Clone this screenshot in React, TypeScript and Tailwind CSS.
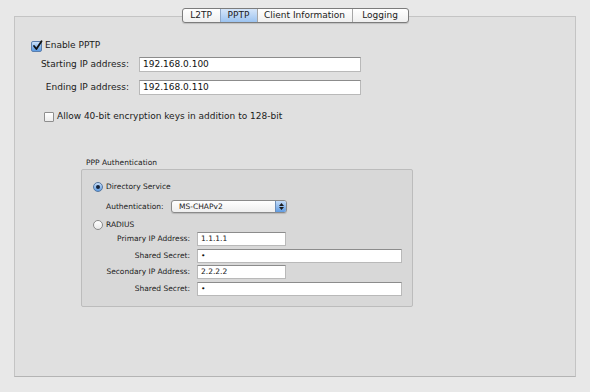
import React from "react";

const font = { fontFamily: '"DejaVu Sans", "Liberation Sans", sans-serif' };

function Check({ checked, size }: { checked: boolean; size: number }) {
  if (checked) {
    return (
      <div
        className="relative shrink-0 rounded-[2px] border border-[#5b7fae] bg-linear-to-b from-[#cfe3f9] via-[#8dbbee] to-[#5c9be2]"
        style={{ width: size, height: size }}
      >
        <svg className="absolute left-[0px] top-[-2px]" width={size} height={size} viewBox="0 0 12 12">
          <path d="M2.2 6.5 L4.8 9.8 L10.4 1.4" fill="none" stroke="#111" strokeWidth="2" strokeLinecap="round" strokeLinejoin="round" />
        </svg>
      </div>
    );
  }
  return (
    <div
      className="shrink-0 rounded-[1px] border border-[#8e8e8e] bg-linear-to-b from-[#ffffff] to-[#ececec]"
      style={{ width: size, height: size }}
    />
  );
}

function Radio({ on }: { on: boolean }) {
  if (on) {
    return (
      <div className="flex h-[10px] w-[10px] shrink-0 items-center justify-center rounded-full border border-[#56779f] bg-linear-to-b from-[#c8def8] to-[#5f9ce2]">
        <div className="h-[4px] w-[4px] rounded-full bg-[#14233a]" />
      </div>
    );
  }
  return <div className="h-[10px] w-[10px] shrink-0 rounded-full border border-[#8a8a8a] bg-linear-to-b from-[#ffffff] to-[#e9e9e9]" />;
}

function Field({ w, h, value, small }: { w: number; h: number; value: string; small?: boolean }) {
  return (
    <div
      className={
        "flex shrink-0 items-center border border-[#b9b9b9] border-t-[#8c8c8c] bg-white pl-[3px] text-[#111] " +
        (small ? "text-[7.5px]" : "text-[9px]")
      }
      style={{ width: w, height: h }}
    >
      {value}
    </div>
  );
}

export default function App() {
  return (
    <div className="h-[392px] w-[590px] overflow-hidden bg-[#e8e8e8] pt-[8px] text-[#1b1b1b]" style={font}>
      {/* tabs */}
      <div className="relative z-10 flex justify-center">
        <div className="flex h-[15px] overflow-hidden rounded-[3px] border border-[#7c7c7c] bg-linear-to-b from-[#ffffff] to-[#efefef] text-[9px] shadow-[0_1px_1px_rgba(0,0,0,0.15)]">
          <div className="flex w-[37px] items-center justify-center">L2TP</div>
          <div className="flex w-[37px] items-center justify-center border-l border-[#8fa9c9] bg-linear-to-b from-[#d6e6f9] to-[#9cc3f0]">PPTP</div>
          <div className="flex w-[95px] items-center justify-center border-l border-[#a6a6a6]">Client Information</div>
          <div className="flex w-[56px] items-center justify-center border-l border-[#a6a6a6]">Logging</div>
        </div>
      </div>

      {/* panel */}
      <div className="mx-[14px] mt-[-7px] flex h-[361px] flex-col border border-[#c4c4c4] border-b-[#b4b4b4] bg-[#e0e0e0] text-[9px]">
        <div className="ml-[16px] mt-[23px] flex h-[12px] items-center gap-[3px]">
          <Check checked size={11} />
          <span>Enable PPTP</span>
        </div>

        <div className="mt-[5px] flex items-center">
          <div className="w-[114px] text-right">Starting IP address:</div>
          <div className="ml-[10px]">
            <Field w={222} h={15} value="192.168.0.100" />
          </div>
        </div>
        <div className="mt-[8px] flex items-center">
          <div className="w-[114px] text-right">Ending IP address:</div>
          <div className="ml-[10px]">
            <Field w={222} h={15} value="192.168.0.110" />
          </div>
        </div>

        <div className="ml-[29px] mt-[16px] flex h-[11px] items-center gap-[3px]">
          <Check checked={false} size={10} />
          <span>Allow 40-bit encryption keys in addition to 128-bit</span>
        </div>

        {/* group */}
        <div className="ml-[71px] mt-[36px] h-[10px] text-[7.5px] leading-[10px]">PPP Authentication</div>
        <div className="ml-[66px] mt-[1px] flex h-[138px] w-[332px] flex-col rounded-[2px] border border-[#bcbcbc] bg-[#d8d8d8] text-[7.5px]">
          <div className="ml-[11px] mt-[12px] flex h-[10px] items-center gap-[3px]">
            <Radio on />
            <span>Directory Service</span>
          </div>
          <div className="ml-[24px] mt-[8px] flex h-[13px] items-center">
            <span className="w-[57px]">Authentication:</span>
            <div className="ml-[8px] flex h-[13px] w-[116px] overflow-hidden rounded-[3px] border border-[#8a8a8a] bg-linear-to-b from-[#ffffff] to-[#eeeeee] shadow-[0_1px_1px_rgba(0,0,0,0.15)]">
              <div className="flex flex-1 items-center pl-[7px]">MS-CHAPv2</div>
              <div className="flex w-[11px] flex-col items-center justify-center gap-[1px] border-l border-[#6d8fba] bg-linear-to-b from-[#c4dcf8] to-[#5f9be1]">
                <svg width="5" height="3" viewBox="0 0 5 3">
                  <path d="M0 3 L2.5 0 L5 3 Z" fill="#1a1a1a" />
                </svg>
                <svg width="5" height="3" viewBox="0 0 5 3">
                  <path d="M0 0 L2.5 3 L5 0 Z" fill="#1a1a1a" />
                </svg>
              </div>
            </div>
          </div>
          <div className="ml-[11px] mt-[7px] flex h-[10px] items-center gap-[3px]">
            <Radio on={false} />
            <span>RADIUS</span>
          </div>

          <div className="mt-[2px] flex items-center">
            <div className="w-[108px] text-right">Primary IP Address:</div>
            <div className="ml-[7px]">
              <Field w={89} h={14} value="1.1.1.1" small />
            </div>
          </div>
          <div className="mt-[3px] flex items-center">
            <div className="w-[108px] text-right">Shared Secret:</div>
            <div className="ml-[7px]">
              <Field w={205} h={14} value="•" small />
            </div>
          </div>
          <div className="mt-[2px] flex items-center">
            <div className="w-[108px] text-right">Secondary IP Address:</div>
            <div className="ml-[7px]">
              <Field w={89} h={14} value="2.2.2.2" small />
            </div>
          </div>
          <div className="mt-[3px] flex items-center">
            <div className="w-[108px] text-right">Shared Secret:</div>
            <div className="ml-[7px]">
              <Field w={205} h={14} value="•" small />
            </div>
          </div>
        </div>
      </div>
    </div>
  );
}
